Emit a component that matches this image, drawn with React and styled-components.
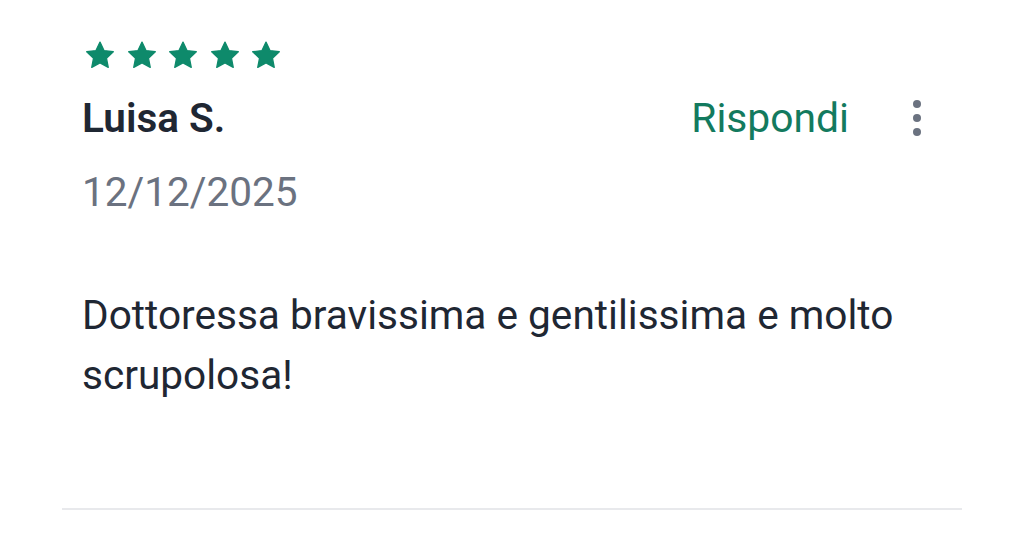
import React from "react";
import styled, { createGlobalStyle } from "styled-components";

const GlobalStyle = createGlobalStyle`
  html, body {
    margin: 0;
    padding: 0;
    background: #ffffff;
  }
  body {
    font-family: Roboto, "Noto Sans", Arial, sans-serif;
  }
`;

const Card = styled.article`
  margin: 0 62px;
  padding: 40px 0 0;
  border-bottom: 2px solid #e8e9ec;
  height: 510px;
  box-sizing: border-box;
`;

const Inner = styled.div`
  padding: 0 33px 0 20px;
`;

const Stars = styled.div`
  display: flex;
  gap: 9.5px;
  margin-left: 2px;
`;

const Header = styled.div`
  display: flex;
  align-items: center;
  margin-top: 23px;
`;

const Name = styled.h3`
  flex: 1;
  margin: 0;
  font-size: 40.5px;
  line-height: 48px;
  font-weight: 600;
  color: #1f2733;
`;

const ReplyButton = styled.button`
  border: 0;
  background: none;
  padding: 0;
  font-family: inherit;
  font-size: 40.8px;
  line-height: 48px;
  color: #137a5e;
  cursor: pointer;
`;

const MoreButton = styled.button`
  border: 0;
  background: none;
  padding: 0;
  margin-left: 56px;
  width: 24px;
  height: 48px;
  display: flex;
  align-items: center;
  justify-content: center;
  cursor: pointer;
`;

const DateText = styled.div`
  margin-top: 26px;
  font-size: 40.5px;
  line-height: 48px;
  color: #6b7280;
`;

const Body = styled.p`
  margin: 69px 0 0;
  font-size: 40.6px;
  line-height: 60px;
  color: #1f2733;
`;

function Star() {
  return (
    <svg width="32" height="31" viewBox="0 0 24 24">
      <path
        fill="#0e8a6b"
        d="M12 1.6l3.1 6.6 7.2.9-5.3 5 1.4 7.1L12 17.7l-6.4 3.5 1.4-7.1-5.3-5 7.2-.9z"
        strokeLinejoin="round"
        stroke="#0e8a6b"
        strokeWidth="1"
      />
    </svg>
  );
}

function Dots() {
  return (
    <svg width="10" height="40" viewBox="0 0 10 40">
      <circle cx="5" cy="6" r="4" fill="#6b7280" />
      <circle cx="5" cy="20" r="4" fill="#6b7280" />
      <circle cx="5" cy="34" r="4" fill="#6b7280" />
    </svg>
  );
}

export default function App() {
  return (
    <>
      <GlobalStyle />
      <Card>
        <Inner>
          <Stars>
            {[0, 1, 2, 3, 4].map((i) => (
              <Star key={i} />
            ))}
          </Stars>
          <Header>
            <Name>Luisa S.</Name>
            <ReplyButton>Rispondi</ReplyButton>
            <MoreButton aria-label="Altro">
              <Dots />
            </MoreButton>
          </Header>
          <DateText>12/12/2025</DateText>
          <Body>Dottoressa bravissima e gentilissima e molto scrupolosa!</Body>
        </Inner>
      </Card>
    </>
  );
}
